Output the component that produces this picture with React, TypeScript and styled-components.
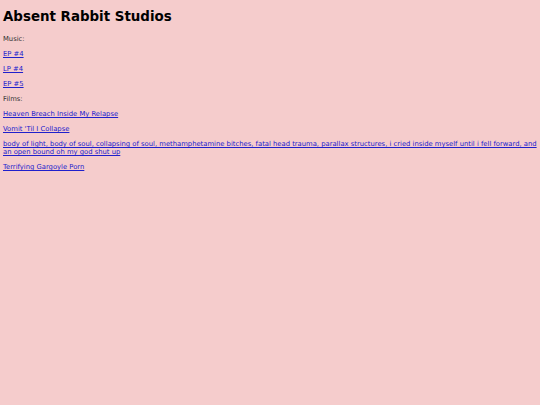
import React from "react";
import styled, { createGlobalStyle } from "styled-components";

const Global = createGlobalStyle`
  html, body { background: #f5cccc; }
  body { margin: 0; padding: 5px 2px 4px 3px; font-family: "DejaVu Sans", Verdana, sans-serif; color: #333; }
`;

const Title = styled.h1`
  font-size: 13.4px;
  font-weight: bold;
  margin: 4px 0 11px;
  color: #000;
`;

const Label = styled.p`
  font-size: 6.8px;
  line-height: 8px;
  margin: 0 0 7px;
`;

const Item = styled(Label)``;

const Link = styled.a`
  color: #2020cc;
`;

const music = ["EP #4", "LP #4", "EP #5"];
const films = [
  "Heaven Breach Inside My Relapse",
  "Vomit 'Til I Collapse",
  "body of light, body of soul, collapsing of soul, methamphetamine bitches, fatal head trauma, parallax structures, i cried inside myself until i fell forward, and an open bound oh my god shut up",
  "Terrifying Gargoyle Porn",
];

export default function App() {
  return (
    <>
      <Global />
      <Title>Absent Rabbit Studios</Title>
      <Label>Music:</Label>
      {music.map((m) => (
        <Item key={m}><Link href="#">{m}</Link></Item>
      ))}
      <Label>Films:</Label>
      {films.map((f) => (
        <Item key={f}><Link href="#">{f}</Link></Item>
      ))}
    </>
  );
}
